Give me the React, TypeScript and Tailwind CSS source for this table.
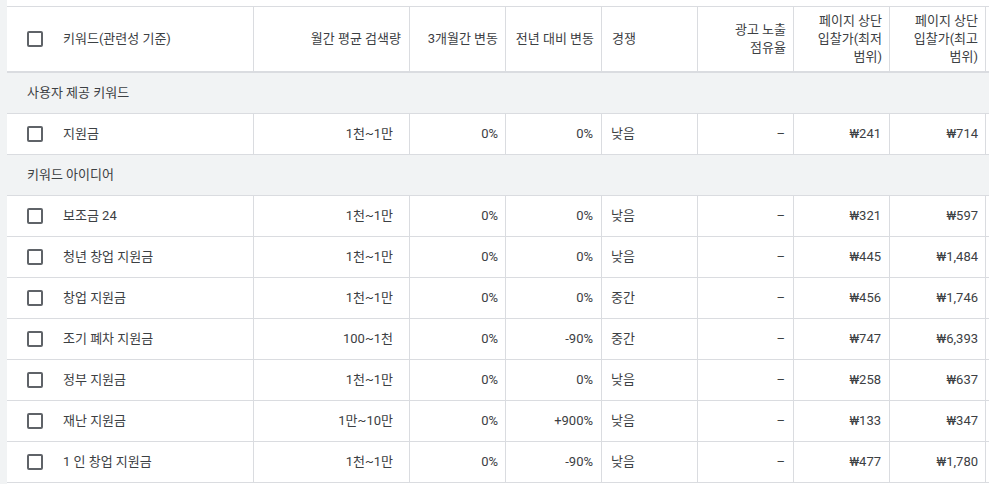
import React from "react";

type Row =
  | { kind: "group"; label: string }
  | { kind: "data"; cells: string[] };

const rows: Row[] = [
  { kind: "group", label: "사용자 제공 키워드" },
  { kind: "data", cells: ["지원금", "1천~1만", "0%", "0%", "낮음", "–", "₩241", "₩714"] },
  { kind: "group", label: "키워드 아이디어" },
  { kind: "data", cells: ["보조금 24", "1천~1만", "0%", "0%", "낮음", "–", "₩321", "₩597"] },
  { kind: "data", cells: ["청년 창업 지원금", "1천~1만", "0%", "0%", "낮음", "–", "₩445", "₩1,484"] },
  { kind: "data", cells: ["창업 지원금", "1천~1만", "0%", "0%", "중간", "–", "₩456", "₩1,746"] },
  { kind: "data", cells: ["조기 폐차 지원금", "100~1천", "0%", "-90%", "중간", "–", "₩747", "₩6,393"] },
  { kind: "data", cells: ["정부 지원금", "1천~1만", "0%", "0%", "낮음", "–", "₩258", "₩637"] },
  { kind: "data", cells: ["재난 지원금", "1만~10만", "0%", "+900%", "낮음", "–", "₩133", "₩347"] },
  { kind: "data", cells: ["1 인 창업 지원금", "1천~1만", "0%", "-90%", "낮음", "–", "₩477", "₩1,780"] },
];

function Checkbox() {
  return <div className="w-4 h-4 shrink-0 border-2 border-[#5f6368] rounded-[2px]" />;
}

const cell = "w-[96px] shrink-0 border-r border-[#dadce0] flex items-center";

export default function App() {
  return (
    <div
      className="w-[989px] h-[484px] overflow-hidden bg-[#f1f3f4] pl-[7px] flex text-[13px] text-[#3c4043]"
      style={{ fontFamily: "Roboto, 'Noto Sans CJK KR', 'Noto Sans', sans-serif" }}
    >
      <div className="flex-1 bg-white pt-[6px] overflow-hidden">
        <div className="w-[1200px] border-t border-[#dadce0]">
          {/* header */}
          <div className="flex h-[66px] border-b-2 border-[#dadce0] text-[#3c4043] leading-[18px]">
            <div className="w-[247px] shrink-0 border-r border-[#dadce0] flex items-center pl-[20px] gap-[20px]">
              <Checkbox />
              <span>키워드(관련성 기준)</span>
            </div>
            <div className="w-[156px] shrink-0 border-r border-[#dadce0] flex items-center justify-end pr-[8px]">
              월간 평균 검색량
            </div>
            <div className={`${cell} justify-end pr-[7px]`}>3개월간 변동</div>
            <div className={`${cell} justify-end pr-[7px]`}>전년 대비 변동</div>
            <div className={`${cell} pl-[10px]`}>경쟁</div>
            <div className={`${cell} justify-end pr-[7px] text-right`}>
              <span>
                광고 노출
                <br />
                점유율
              </span>
            </div>
            <div className={`${cell} justify-end pr-[7px] text-right`}>
              <span>
                페이지 상단
                <br />
                입찰가(최저
                <br />
                범위)
              </span>
            </div>
            <div className={`${cell} justify-end pr-[7px] text-right`}>
              <span>
                페이지 상단
                <br />
                입찰가(최고
                <br />
                범위)
              </span>
            </div>
            <div className={cell} />
          </div>
          {rows.map((r, i) =>
            r.kind === "group" ? (
              <div
                key={i}
                className="h-[41px] bg-[#f1f3f4] border-b border-[#dadce0] flex items-center pl-[20px]"
              >
                {r.label}
              </div>
            ) : (
              <div key={i} className="flex h-[41px] border-b border-[#dadce0]">
                <div className="w-[247px] shrink-0 border-r border-[#dadce0] flex items-center pl-[20px] gap-[20px]">
                  <Checkbox />
                  <span>{r.cells[0]}</span>
                </div>
                <div className="w-[156px] shrink-0 border-r border-[#dadce0] flex items-center justify-end pr-[16px]">
                  {r.cells[1]}
                </div>
                <div className={`${cell} justify-end pr-[7px]`}>{r.cells[2]}</div>
                <div className={`${cell} justify-end pr-[8px]`}>{r.cells[3]}</div>
                <div className={`${cell} pl-[9px]`}>{r.cells[4]}</div>
                <div className={`${cell} justify-end pr-[8px]`}>{r.cells[5]}</div>
                <div className={`${cell} justify-end pr-[8px]`}>{r.cells[6]}</div>
                <div className={`${cell} justify-end pr-[7px]`}>{r.cells[7]}</div>
                <div className={cell} />
              </div>
            )
          )}
        </div>
      </div>
    </div>
  );
}
